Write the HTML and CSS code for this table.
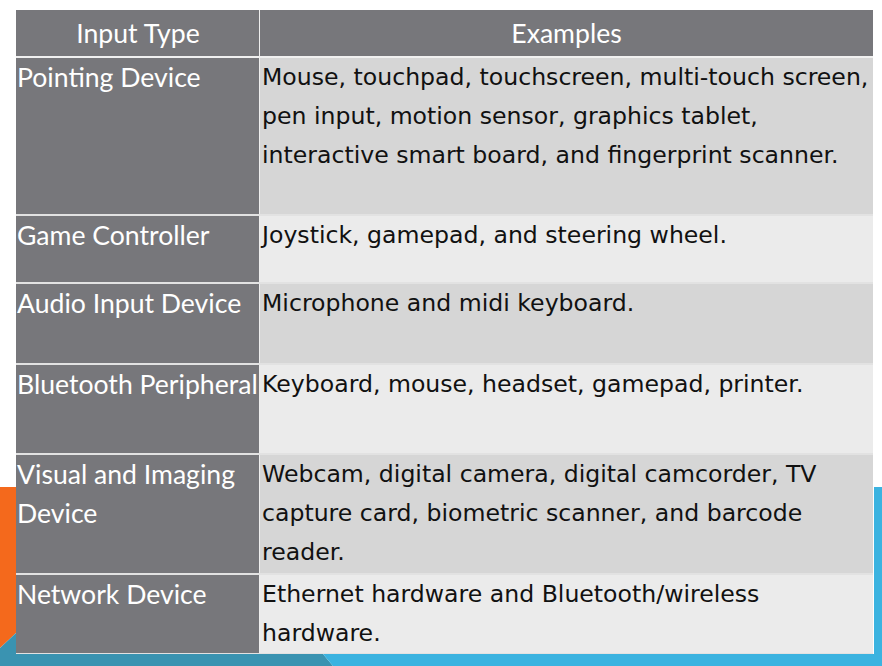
FILE: index.html
```html
<!DOCTYPE html>
<html>
<head>
<meta charset="utf-8">
<link rel="stylesheet" href="styles.css">
</head>
<body>
<svg class="deco" width="882" height="666" viewBox="0 0 882 666" aria-hidden="true">
  <polygon points="0,487 16,487 16,633 0,648" fill="#f4691c"/>
  <polygon points="0,648 16,633 16,654 323,654 333,666 0,666" fill="#3a93b1"/>
  <polygon points="874,487 882,487 882,666 333,666 323,654 874,654" fill="#3bb3e0"/>
</svg>
<div class="table">
  <div class="row head">
    <div class="c1">Input Type</div>
    <div class="c2">Examples</div>
  </div>
  <div class="row r1 odd">
    <div class="c1">Pointing Device</div>
    <div class="c2">Mouse, touchpad, touchscreen, multi-touch screen, pen input, motion sensor, graphics tablet, interactive smart board, and fingerprint scanner.</div>
  </div>
  <div class="row r2 even">
    <div class="c1">Game Controller</div>
    <div class="c2">Joystick, gamepad, and steering wheel.</div>
  </div>
  <div class="row r3 odd">
    <div class="c1">Audio Input Device</div>
    <div class="c2">Microphone and midi keyboard.</div>
  </div>
  <div class="row r4 even">
    <div class="c1 nowrap">Bluetooth Peripheral</div>
    <div class="c2">Keyboard, mouse, headset, gamepad, printer.</div>
  </div>
  <div class="row r5 odd">
    <div class="c1">Visual and Imaging Device</div>
    <div class="c2">Webcam, digital camera, digital camcorder, TV capture card, biometric scanner, and barcode reader.</div>
  </div>
  <div class="row r6 even">
    <div class="c1">Network Device</div>
    <div class="c2">Ethernet hardware and Bluetooth/wireless hardware.</div>
  </div>
</div>
</body>
</html>
```

FILE: styles.css
```css
html, body {
  margin: 0;
  padding: 0;
  background: #ffffff;
}
body {
  width: 882px;
  height: 666px;
  overflow: hidden;
  position: relative;
}
.deco {
  position: absolute;
  left: 0;
  top: 0;
}
.table {
  position: relative;
  margin: 10px 0 0 16px;
  width: 857px;
  display: flex;
  flex-direction: column;
}
.row {
  display: grid;
  grid-template-columns: 244px 1fr;
  box-sizing: border-box;
  border-bottom: 2px solid #e2e2e2;
}
.c1 {
  background: #77777b;
  color: #ffffff;
  font-family: "Lato", "Open Sans", sans-serif;
  font-size: 26.6px;
  line-height: 39px;
  padding: 0 0 0 1px;
  border-right: 1px solid #eeeeee;
}
.nowrap {
  white-space: nowrap;
  overflow: visible;
}
.c2 {
  color: #111111;
  font-family: "DejaVu Sans", Verdana, sans-serif;
  font-size: 23.6px;
  line-height: 39px;
  padding: 0 2px 0 2px;
}
.head {
  height: 48px;
  border-bottom: 4px solid #f0f0f0;
}
.head .c1, .head .c2 {
  background: #77777b;
  color: #ffffff;
  font-family: "Lato", "Open Sans", sans-serif;
  font-size: 26.6px;
  line-height: 46px;
  text-align: center;
}
.odd .c2 { background: #d6d6d6; }
.even .c2 { background: #ebebeb; }
.r1 { height: 158px; }
.r2 { height: 68px; }
.r3 { height: 81px; }
.r4 { height: 90px; }
.r5 { height: 120px; }
.r6 { height: 79px; }
```
